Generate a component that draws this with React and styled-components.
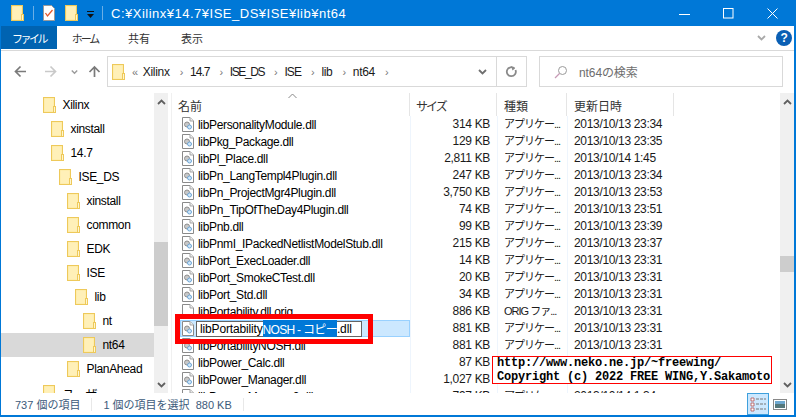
import React from 'react'
import styled, { createGlobalStyle } from 'styled-components'

const Global = createGlobalStyle`
  html, body { margin: 0; padding: 0; background: #fff; overflow: hidden; }
  body { font-family: "Liberation Sans", "Noto Sans CJK JP", sans-serif; font-size: 12px; color: #000; letter-spacing: -0.33px; }
  * { box-sizing: border-box; }
`

const Window = styled.div`
  position: relative;
  width: 796px;
  height: 417px;
  display: flex;
  flex-direction: column;
  background: #fff;
  border: solid #0078d7;
  border-width: 0 2px 2px 1px;
  overflow: hidden;
`
const TitleBar = styled.div`
  height: 26px;
  margin: 0 -2px 0 -1px;
  flex: none;
  background: #0078d7;
  color: #fff;
  display: flex;
  align-items: center;
  padding-left: 11px;
`
const TitleText = styled.span`
  font-size: 13px;
  letter-spacing: 0.5px;
`
const Sep = styled.span`
  width: 1px;
  height: 14px;
  background: #6aaee6;
  margin: 0 ${p => p.$gap || 10}px;
`
const WinButtons = styled.div`
  margin-left: auto;
  display: flex;
  align-items: center;
  gap: 33px;
  padding-right: 18px;
`
const Ribbon = styled.div`
  height: 25px;
  flex: none;
  display: flex;
  align-items: flex-start;
  border-bottom: 1px solid #d9d9d9;
  padding-right: 2px;
`
const Tab = styled.div`
  width: ${p => p.$w}px;
  height: 23px;
  display: flex;
  align-items: center;
  justify-content: center;
  font-size: 11px;
  letter-spacing: ${p => p.$sp || 0}px;
  color: ${p => (p.$active ? '#fff' : '#333')};
  background: ${p => (p.$active ? '#0063b1' : 'transparent')};
`
const RibbonRight = styled.div`
  margin-left: auto;
  height: 23px;
  display: flex;
  align-items: center;
  gap: 10px;
`
const Help = styled.div`
  width: 16px;
  height: 16px;
  border-radius: 50%;
  background: #0a5fb4;
  color: #fff;
  font-weight: bold;
  font-size: 12px;
  display: flex;
  align-items: center;
  justify-content: center;
`
const NavBar = styled.div`
  height: 42px;
  flex: none;
  display: flex;
  align-items: center;
  padding: 0 0 1px 13px;
`
const NavIcons = styled.div`
  width: 93px;
  flex: none;
  display: flex;
  align-items: center;
`
const NavGap = styled.span`
  width: ${p => p.$w}px;
  flex: none;
`
const AddressBox = styled.div`
  width: 420px;
  height: 31px;
  border: 1px solid #d9d9d9;
  display: flex;
  align-items: center;
  padding-left: 4px;
`
const Crumb = styled.span`
  color: #1a1a1a;
  margin-right: 10px;
  letter-spacing: ${p => p.$sp ?? -0.3}px;
`
const Chev = styled.span`
  color: #777;
  font-size: 11px;
  margin: 1px 7px 0 0;
`
const LeadChev = styled(Chev)`
  margin: 1px 5px 0 7px;
`
const AddressEnd = styled.div`
  margin-left: auto;
  height: 100%;
  display: flex;
  align-items: center;
`
const RefreshCell = styled.div`
  width: 30px;
  height: 100%;
  border-left: 1px solid #d9d9d9;
  margin-left: 9px;
  display: flex;
  align-items: center;
  justify-content: center;
`
const SearchBox = styled.div`
  width: 244px;
  height: 31px;
  margin-left: 12px;
  border: 1px solid #d9d9d9;
  display: flex;
  align-items: center;
  padding-left: 14px;
  color: #6d6d6d;
  gap: 11px;
  letter-spacing: -0.1px;
`
const Body = styled.div`
  flex: 1;
  min-height: 0;
  display: flex;
`
const Tree = styled.div`
  width: 153px;
  flex: none;
  overflow: hidden;
`
const TreeRow = styled.div`
  height: 24px;
  display: flex;
  align-items: center;
  padding-left: ${p => p.$indent}px;
  gap: 6.500px;
  background: ${p => (p.$selected ? '#d9d9d9' : 'transparent')};
`
const ScrollBar = styled.div`
  width: 14px;
  flex: none;
  background: #f0f0f0;
  display: flex;
  flex-direction: column;
`
const ScrollArrow = styled.div`
  height: 17px;
  flex: none;
  display: flex;
  align-items: center;
  justify-content: center;
`
const ScrollTrack = styled.div`
  flex: 1;
  padding-top: ${p => p.$top}px;
`
const Thumb = styled.div`
  height: ${p => p.$h}px;
  background: #cdcdcd;
`
const List = styled.div`
  flex: 1;
  min-width: 0;
  margin-left: 3px;
  border-left: 1px solid #f0f0f0;
  overflow: hidden;
  display: flex;
  flex-direction: column;
`
const Head = styled.div`
  height: 23px;
  flex: none;
  display: grid;
  grid-template-columns: 238px 87px 70px 107px;
  align-items: center;
`
const HeadCell = styled.div`
  position: relative;
  height: 100%;
  display: flex;
  align-items: center;
  padding-left: ${p => p.$pad}px;
  padding-top: 2px;
  color: #333;
  font-size: 12px;
  letter-spacing: ${p => p.$sp || 0}px;
  border-right: 1px solid #e5e5e5;
`
const SortMark = styled.svg`
  position: absolute;
  left: 116px;
  top: 0;
`
const Rows = styled.div`
  flex: 1;
  min-height: 0;
  overflow: hidden;
`
const Row = styled.div`
  height: 17px;
  display: grid;
  grid-template-columns: 238px 87px 70px 107px;
  align-items: center;
`
const NameCell = styled.div`
  display: flex;
  align-items: center;
  height: 17px;
  padding-left: 10px;
  gap: 4px;
  white-space: nowrap;
  ${p => p.$selected && `
    background: #cce8ff;
    border: 1px solid #99d1ff;
    margin-left: 8px;
    padding-left: 1px;
    gap: 2px;
  `}
`
const Cell = styled.div`
  height: 17px;
  line-height: 17px;
  padding-left: ${p => p.$pad || 0}px;
  padding-right: ${p => p.$right || 0}px;
  text-align: ${p => p.$align || 'left'};
  white-space: nowrap;
  color: #1a1a1a;
  box-shadow: inset 1px 0 0 #eef5fd;
`
const KindCell = styled(Cell)`
  font-size: 11px;
  letter-spacing: -1px;
`
const RenameBox = styled.div`
  width: 166px;
  height: 16px;
  background: #fff;
  border: 1px solid #646464;
  padding-left: 3px;
  display: flex;
  align-items: center;
  white-space: nowrap;
  letter-spacing: -0.15px;
`
const Picked = styled.span`
  background: #0078d7;
  color: #fff;
  letter-spacing: -0.7px;
`
const RedBox = styled.div`
  position: absolute;
  left: 174px;
  top: 314px;
  width: 198px;
  height: 30px;
  border: 5px solid #f00;
`
const Stamp = styled.div`
  position: absolute;
  left: 491px;
  top: 356px;
  width: 280px;
  height: 28px;
  border: 1px solid #f00;
  background: #fff;
  color: #000;
  font-family: "Liberation Mono", monospace;
  font-weight: bold;
  font-size: 12px;
  letter-spacing: -0.2px;
  line-height: 13.500px;
  padding-left: 4px;
  white-space: nowrap;
`
const StatusBar = styled.div`
  height: 22px;
  flex: none;
  display: flex;
  align-items: center;
  color: #3b5a7a;
  font-size: 11px;
  letter-spacing: 0;
  padding-left: 14px;
`
const StatusGap = styled.span`
  width: 1px;
  height: 13px;
  background: #e8e8e8;
  margin: 0 ${p => p.$gap}px;
`
const ViewButtons = styled.div`
  margin-left: auto;
  display: flex;
  align-items: center;
  height: 100%;
  padding-right: 3px;
`
const ViewBtn = styled.div`
  width: 22px;
  height: 100%;
  display: flex;
  align-items: center;
  justify-content: center;
  background: ${p => (p.$on ? '#cce8ff' : 'transparent')};
  border: 1px solid ${p => (p.$on ? '#3fa0dc' : 'transparent')};
`

const Folder = () => (
  <svg width="13" height="16" viewBox="0 0 13 16" style={{ flex: 'none' }}>
    <rect x="0.5" y="0.5" width="11" height="15" fill="#fdeaa0" stroke="#eec95a" />
    <rect x="1.5" y="1.5" width="9" height="13" fill="#fff0b8" />
    <rect x="10.5" y="9.5" width="2" height="6" fill="#fff6d0" stroke="#eec95a" />
  </svg>
)

const DllIcon = () => (
  <svg width="12" height="15" viewBox="0 0 12 15" style={{ flex: 'none' }}>
    <path d="M.5.5h7.500l3.500 3.500v10.500h-11z" fill="#fff" stroke="#8a8a8a" />
    <path d="M8 .5v3.500h3.500" fill="#eee" stroke="#a5a5a5" />
    <circle cx="5" cy="7.500" r="2.500" fill="#c8c8c8" stroke="#8f8f8f" />
    <circle cx="7.500" cy="10" r="2" fill="#cfe6f8" stroke="#6ea6d6" />
  </svg>
)

const PlainIcon = () => (
  <svg width="12" height="15" viewBox="0 0 12 15" style={{ flex: 'none' }}>
    <path d="M.5.5h7.500l3.500 3.500v10.500h-11z" fill="#fff" stroke="#8a8a8a" />
    <path d="M8 .5v3.500h3.500" fill="#eee" stroke="#a5a5a5" />
  </svg>
)

const Caret = ({ up, color = '#606060', w = 9 }) => (
  <svg width={w} height="6" viewBox="0 0 9 6" style={{ flex: 'none' }}>
    <path d={up ? 'M1 5l3.500-3.500L8 5' : 'M1 1l3.500 3.500L8 1'} fill="none" stroke={color} strokeWidth="1.800" />
  </svg>
)

const Arrow = ({ dir, color }) => (
  <svg width="13" height="13" viewBox="0 0 13 13" style={{ flex: 'none' }}>
    <path
      d={dir === 'up' ? 'M6.500 12V2M1.500 7l5-5 5 5' : dir === 'left' ? 'M12 6.500H1.500M6.500 1.500l-5 5 5 5' : 'M1 6.500h10.500M6.500 1.500l5 5-5 5'}
      fill="none"
      stroke={color}
      strokeWidth="1.700"
    />
  </svg>
)

const tree = [
  ['Xilinx', 42], ['xinstall', 50], ['14.7', 50], ['ISE_DS', 58], ['xinstall', 66], ['common', 66],
  ['EDK', 66], ['ISE', 66], ['lib', 74], ['nt', 82], ['nt64', 82, true], ['PlanAhead', 66], ['ユーザー', 42],
]

const APP = 'アプリケー...'
const files = [
  ['libPersonalityModule.dll', '314 KB', APP, '2013/10/13 23:34'],
  ['libPkg_Package.dll', '129 KB', APP, '2013/10/13 23:35'],
  ['libPl_Place.dll', '2,811 KB', APP, '2013/10/14 1:45'],
  ['libPn_LangTempl4Plugin.dll', '247 KB', APP, '2013/10/13 23:34'],
  ['libPn_ProjectMgr4Plugin.dll', '3,750 KB', APP, '2013/10/13 23:53'],
  ['libPn_TipOfTheDay4Plugin.dll', '74 KB', APP, '2013/10/13 23:51'],
  ['libPnb.dll', '99 KB', APP, '2013/10/13 23:39'],
  ['libPnmI_IPackedNetlistModelStub.dll', '215 KB', APP, '2013/10/13 23:37'],
  ['libPort_ExecLoader.dll', '14 KB', APP, '2013/10/13 23:31'],
  ['libPort_SmokeCTest.dll', '20 KB', APP, '2013/10/13 23:31'],
  ['libPort_Std.dll', '34 KB', APP, '2013/10/13 23:31'],
  ['libPortability.dll.orig', '886 KB', 'ORIG ファ...', '2013/10/13 23:31', 'plain'],
  ['rename', '881 KB', APP, '2013/10/13 23:31'],
  ['libPortabilityNOSH.dll', '881 KB', APP, '2013/10/13 23:31'],
  ['libPower_Calc.dll', '87 KB', APP, '2013/10/13 23:31'],
  ['libPower_Manager.dll', '1,027 KB', APP, '2013/10/13 23:31'],
  ['libPower_Manager2.dll', '797 KB', APP, '2013/10/14 1:34'],
]

export default function App() {
  return (
    <Window>
      <Global />
      <TitleBar>
        <Folder />
        <Sep $gap={9} />
        <svg width="12" height="16" viewBox="0 0 12 16">
          <path d="M.5.5h8l3 3v12h-11z" fill="#fff" stroke="#9a9a9a" />
          <path d="M2.500 8l2 3 5-6" fill="none" stroke="#e2572b" strokeWidth="1.300" />
        </svg>
        <NavGap $w={10} />
        <Folder />
        <svg width="7" height="7" viewBox="0 0 7 7" style={{ margin: '3px 0 0 9px' }}>
          <path d="M0 0h7v1H0zM0 3h7L3.500 7z" fill="#111" />
        </svg>
        <Sep $gap={8} />
        <TitleText>C:¥Xilinx¥14.7¥ISE_DS¥ISE¥lib¥nt64</TitleText>
        <WinButtons>
          <svg width="11" height="11" viewBox="0 0 11 11"><path d="M0 6.500h11" stroke="#fff" /></svg>
          <svg width="11" height="11" viewBox="0 0 11 11"><rect x=".5" y=".5" width="9.500" height="9.500" fill="none" stroke="#fff" /></svg>
          <svg width="11" height="11" viewBox="0 0 11 11"><path d="M.5.500l10 10M10.500.500l-10 10" stroke="#fff" /></svg>
        </WinButtons>
      </TitleBar>
      <Ribbon>
        <Tab $w={56} $active $sp={-2.5}>ファイル</Tab>
        <Tab $w={56} $sp={-2}>ホーム</Tab>
        <Tab $w={52}>共有</Tab>
        <Tab $w={54}>表示</Tab>
        <RibbonRight>
          <Caret color="#a9a9a9" />
          <Help>?</Help>
        </RibbonRight>
      </Ribbon>
      <NavBar>
        <NavIcons>
          <Arrow dir="left" color="#7a7a7a" />
          <NavGap $w={17} />
          <Arrow dir="right" color="#c9c9c9" />
          <NavGap $w={14} />
          <Caret color="#9a9a9a" w={7} />
          <NavGap $w={10} />
          <Arrow dir="up" color="#7a7a7a" />
        </NavIcons>
        <AddressBox>
          <Folder />
          <LeadChev>«</LeadChev>
          <Crumb>Xilinx</Crumb><Chev>›</Chev>
          <Crumb $sp={-1}>14.7</Crumb><Chev>›</Chev>
          <Crumb $sp={-1.4}>ISE_DS</Crumb><Chev>›</Chev>
          <Crumb $sp={-0.9}>ISE</Crumb><Chev>›</Chev>
          <Crumb>lib</Crumb><Chev>›</Chev>
          <Crumb>nt64</Crumb><Chev>›</Chev>
          <AddressEnd>
            <Caret color="#6f6f6f" />
            <RefreshCell>
              <svg width="13" height="14" viewBox="0 0 13 14">
                <path d="M10.500 5a4.500 4.500 0 1 1-1-1.500" fill="none" stroke="#8a8a8a" strokeWidth="1.800" />
                <path d="M6 1l4 2.500-2.500 2z" fill="#8a8a8a" />
              </svg>
            </RefreshCell>
          </AddressEnd>
        </AddressBox>
        <SearchBox>
          <svg width="14" height="14" viewBox="0 0 14 14" style={{ flex: 'none' }}>
            <circle cx="8.500" cy="5.500" r="4" fill="none" stroke="#9a9a9a" />
            <path d="M5.500 8.500L1 13" stroke="#c79ab5" strokeWidth="1.300" />
          </svg>
          <span>nt64の検索</span>
        </SearchBox>
      </NavBar>
      <Body>
        <Tree>
          {tree.map(([label, indent, selected], i) => (
            <TreeRow key={i} $indent={indent} $selected={selected}>
              <Folder />
              <span>{label}</span>
            </TreeRow>
          ))}
        </Tree>
        <ScrollBar>
          <ScrollArrow><Caret up /></ScrollArrow>
          <ScrollTrack $top={132}><Thumb $h={84} /></ScrollTrack>
          <ScrollArrow><Caret /></ScrollArrow>
        </ScrollBar>
        <List>
          <Head>
            <HeadCell $pad={6}>
              名前
              <SortMark width="9" height="6" viewBox="0 0 9 6">
                <path d="M.5 5L4.500 1l4 4" fill="none" stroke="#888" />
              </SortMark>
            </HeadCell>
            <HeadCell $pad={6} $sp={-2}>サイズ</HeadCell>
            <HeadCell $pad={7}>種類</HeadCell>
            <HeadCell $pad={7}>更新日時</HeadCell>
          </Head>
          <Rows>
            {files.map(([name, size, kind, date, type], i) => (
              <Row key={i}>
                {name === 'rename' ? (
                  <NameCell $selected>
                    <DllIcon />
                    <RenameBox>libPortability<Picked>NOSH - コピー</Picked>.dll</RenameBox>
                  </NameCell>
                ) : (
                  <NameCell>
                    {type === 'plain' ? <PlainIcon /> : <DllIcon />}
                    <span>{name}</span>
                  </NameCell>
                )}
                <Cell $align="right" $right={7}>{size}</Cell>
                <KindCell $pad={7}>{kind}</KindCell>
                <Cell $pad={7}>{date}</Cell>
              </Row>
            ))}
          </Rows>
        </List>
        <ScrollBar>
          <ScrollArrow><Caret up /></ScrollArrow>
          <ScrollTrack $top={146}><Thumb $h={16} /></ScrollTrack>
          <ScrollArrow><Caret /></ScrollArrow>
        </ScrollBar>
      </Body>
      <StatusBar>
        737 個の項目
        <StatusGap $gap={11} />
        1 個の項目を選択&nbsp;&nbsp;880 KB
        <StatusGap $gap={11} />
        <ViewButtons>
          <ViewBtn $on>
            <svg width="16" height="16" viewBox="0 0 16 16">
              <path d="M1 2h3v3H1zM1 7h3v3H1zM1 12h3v3H1z" fill="#fff" stroke="#b25050" strokeWidth=".8" />
              <path d="M6 3h10M6 8h10M6 13h10" stroke="#777" strokeDasharray="3 1" />
            </svg>
          </ViewBtn>
          <ViewBtn>
            <svg width="14" height="11" viewBox="0 0 14 11">
              <rect x=".5" y=".5" width="13" height="10" fill="#fff" stroke="#888" />
              <rect x="2" y="2" width="10" height="3" fill="#6fa8cf" />
              <rect x="2" y="5" width="10" height="4" fill="#55777a" />
            </svg>
          </ViewBtn>
        </ViewButtons>
      </StatusBar>
      <RedBox />
      <Stamp>
        http://www.neko.ne.jp/~freewing/<br />
        Copyright (c) 2022 FREE WING,Y.Sakamoto
      </Stamp>
    </Window>
  )
}
